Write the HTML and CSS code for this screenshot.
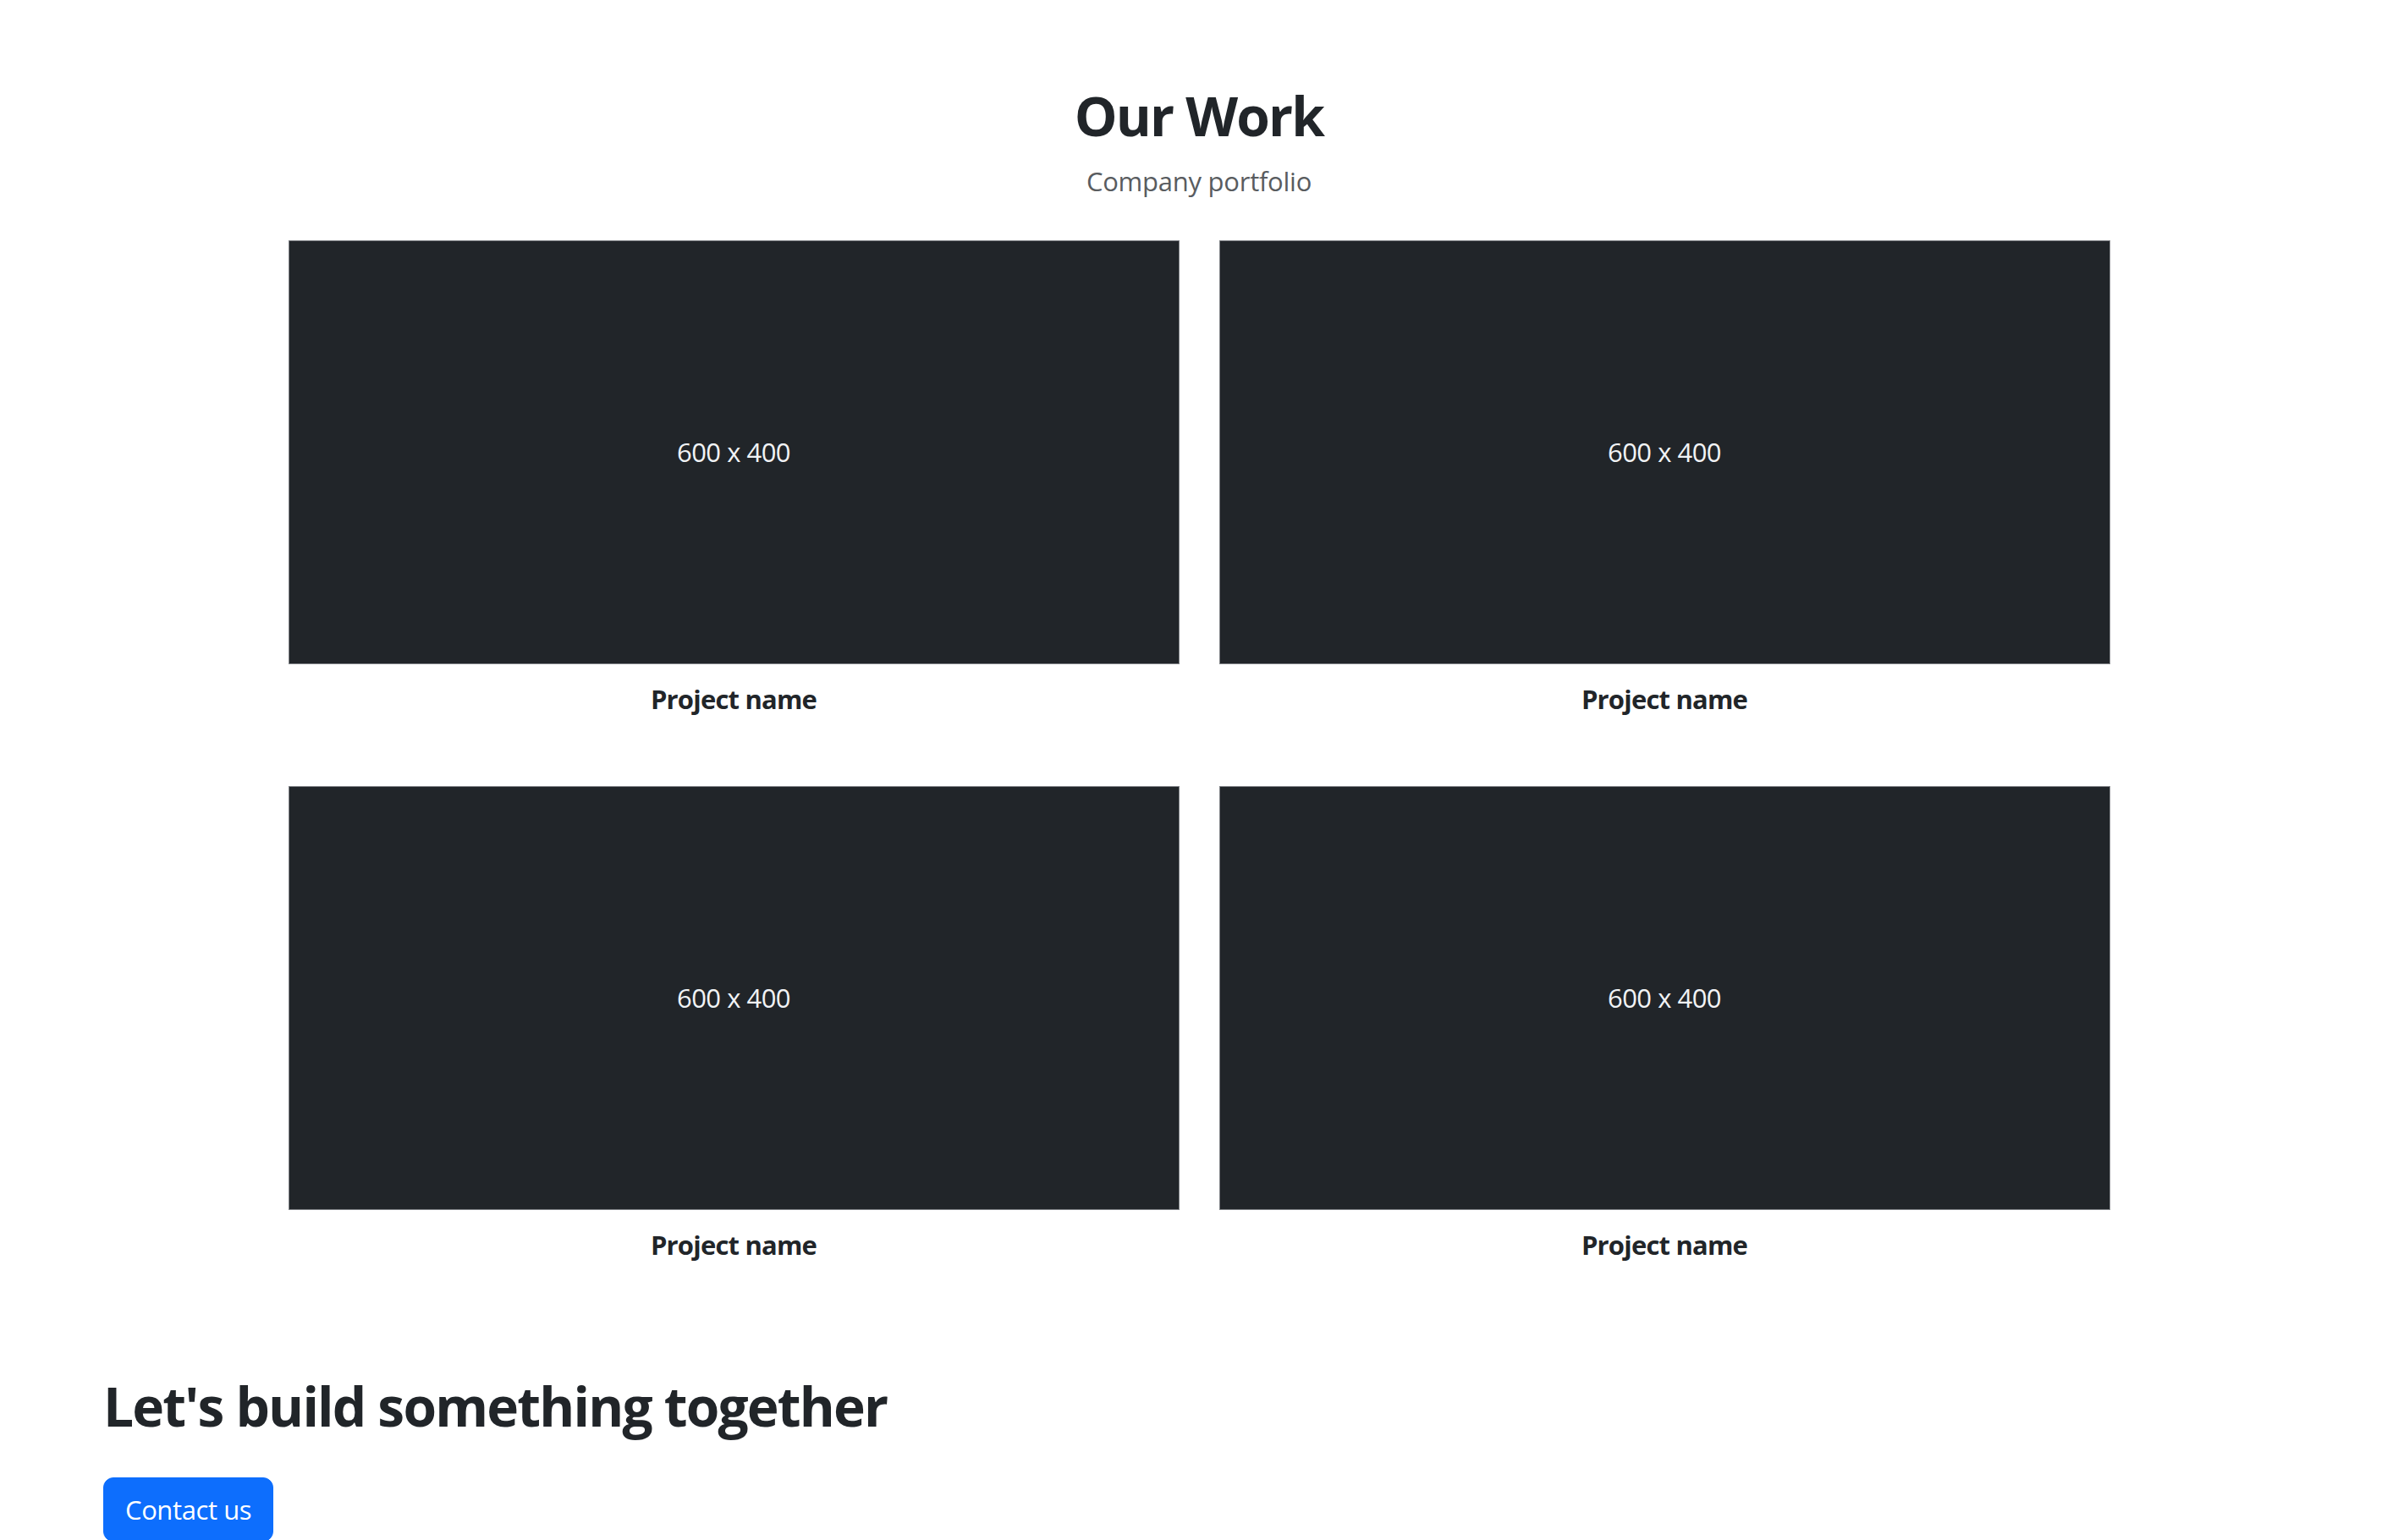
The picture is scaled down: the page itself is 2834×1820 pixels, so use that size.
FILE: index.html
```html
<!DOCTYPE html>
<html lang="en">
<head>
<meta charset="utf-8">
<title>Our Work</title>
<link rel="stylesheet" href="styles.css">
</head>
<body>
<section class="portfolio">
  <header class="portfolio-head">
    <h1 class="title">Our Work</h1>
    <p class="subtitle">Company portfolio</p>
  </header>
  <div class="grid">
    <figure class="item">
      <div class="thumb"><span class="thumb-label">600 x 400</span></div>
      <figcaption class="caption">Project name</figcaption>
    </figure>
    <figure class="item">
      <div class="thumb"><span class="thumb-label">600 x 400</span></div>
      <figcaption class="caption">Project name</figcaption>
    </figure>
    <figure class="item">
      <div class="thumb"><span class="thumb-label">600 x 400</span></div>
      <figcaption class="caption">Project name</figcaption>
    </figure>
    <figure class="item">
      <div class="thumb"><span class="thumb-label">600 x 400</span></div>
      <figcaption class="caption">Project name</figcaption>
    </figure>
  </div>
</section>
<section class="cta">
  <h2 class="cta-title">Let's build something together</h2>
  <a class="btn" href="#">Contact us</a>
</section>
</body>
</html>
```
FILE: styles.css
```css
html, body {
  margin: 0;
  padding: 0;
  background: #ffffff;
}
body {
  font-family: "Open Sans", "Noto Sans", "Liberation Sans", sans-serif;
  color: #212529;
  font-size: 31px;
  overflow: hidden;
}
.portfolio {
  padding-top: 96px;
}
.portfolio-head {
  text-align: center;
}
.title {
  margin: 0;
  font-size: 64px;
  line-height: 82px;
  font-weight: 700;
  letter-spacing: -1.8px;
}
.subtitle {
  margin: 12px 0 0;
  font-size: 31px;
  line-height: 48px;
  letter-spacing: -0.25px;
  color: #595c5f;
}
.grid {
  width: 2153px;
  margin: 46px auto 0;
  display: grid;
  grid-template-columns: 1fr 1fr;
  column-gap: 47px;
  row-gap: 78px;
}
.item {
  margin: 0;
}
.thumb {
  height: 501px;
  box-sizing: border-box;
  background: #212529;
  border: 1px solid #7e8185;
  display: flex;
  align-items: center;
  justify-content: center;
}
.thumb-label {
  color: #f1f3f5;
  font-size: 31px;
  line-height: 1;
  letter-spacing: -0.5px;
}
.caption {
  margin-top: 17px;
  text-align: center;
  font-size: 31px;
  line-height: 49px;
  font-weight: 700;
  letter-spacing: -0.8px;
}
.cta {
  padding: 125px 0 0 122px;
  display: flex;
  flex-direction: column;
  align-items: flex-start;
}
.cta-title {
  margin: 0;
  font-size: 64px;
  line-height: 82px;
  font-weight: 700;
  letter-spacing: -1.8px;
}
.btn {
  margin-top: 43px;
  padding: 12px 25px;
  font-size: 31px;
  line-height: 50px;
  letter-spacing: -0.4px;
  color: #ffffff;
  background: #0d6efd;
  border: 1px solid #0d6efd;
  border-radius: 12px;
  text-decoration: none;
}
```
